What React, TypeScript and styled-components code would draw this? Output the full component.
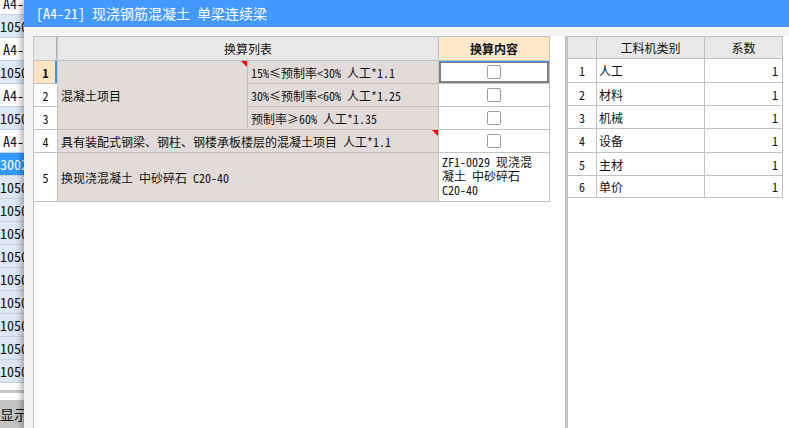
import React from "react";
import styled, { createGlobalStyle } from "styled-components";

const FONT = `"Noto Sans Mono CJK SC", "Noto Sans CJK SC", "DejaVu Sans", sans-serif`;

const Global = createGlobalStyle`
  html, body { margin: 0; padding: 0; background: #fff; }
  body { width: 789px; height: 428px; overflow: hidden; font-family: ${FONT}; color: #111; }
`;

const Page = styled.div`
  display: flex;
  width: 789px;
  height: 428px;
  overflow: hidden;
`;

/* ---------- background application (left, partly covered by the dialog) ---------- */
const BgPane = styled.div`
  width: 64px;
  flex: none;
  display: flex;
  flex-direction: column;
  overflow: hidden;
  background: #fff;
`;
const BgRows = styled.div`
  margin-top: -8px;
  display: flex;
  flex-direction: column;
`;
type Kind = "item" | "code" | "sel";
const BgRow = styled.div<{ $kind: Kind }>`
  height: 22px;
  border-bottom: 1px solid #c9d1dc;
  font-size: 14px;
  line-height: 22px;
  white-space: nowrap;
  padding-left: ${(p) => (p.$kind === "item" ? "3px" : "0")};
  background: ${(p) => (p.$kind === "item" ? "#ffffff" : p.$kind === "sel" ? "#3399ff" : "#dde7f5")};
  color: ${(p) => (p.$kind === "sel" ? "#fff" : "#111")};
`;
const BgFill = styled.div`
  flex: 1;
`;
const BgScroll = styled.div`
  height: 3px;
  background: #c6c6c6;
  margin-bottom: 7px;
`;
const BgButton = styled.div`
  height: 28px;
  background: #c4c4c4;
  font-size: 14px;
  line-height: 28px;
  white-space: nowrap;
`;

/* ---------- dialog ---------- */
const Dialog = styled.div`
  flex: 1;
  min-width: 0;
  margin-left: -40px;
  display: flex;
  flex-direction: column;
  position: relative;
  z-index: 1;
  box-shadow: -3px 0 6px rgba(0, 0, 0, 0.28);
`;
const TitleBar = styled.div`
  height: 27px;
  flex: none;
  background: #4399ff;
  color: #fff;
  font-size: 14px;
  line-height: 27px;
  padding-left: 12px;
  white-space: nowrap;
`;
const Body = styled.div`
  flex: 1;
  display: flex;
  background: #f4f4f4;
  padding: 9px 0 0 9px;
  min-height: 0;
`;
const Content = styled.div`
  flex: 1;
  display: flex;
  align-items: flex-start;
  background: #fff;
  border-left: 1px solid #c4c4c4;
`;

/* ---------- left grid ---------- */
const LINE = "#c2c2c2";
const LeftGrid = styled.div`
  display: grid;
  grid-template-columns: 23px 189px 190px 110px;
  grid-template-rows: 23px 22px 22px 22px 22px 48px;
  gap: 1px;
  background: ${LINE};
  border-top: 1px solid ${LINE};
  border-right: 1px solid ${LINE};
  border-bottom: 1px solid ${LINE};
  font-size: 12px;
`;

type Place = { $row: string; $col: string };

const HeadCell = styled.div<Place & { $accent?: boolean; $corner?: boolean }>`
  grid-row: ${(p) => p.$row};
  grid-column: ${(p) => p.$col};
  background: ${(p) => (p.$accent ? "#ffe7c8" : "#e8e8e8")};
  font-weight: ${(p) => (p.$accent ? 700 : 400)};
  display: flex;
  align-items: center;
  justify-content: center;
  box-shadow: ${(p) => (p.$corner ? "inset -1px 0 0 #b0b0b0" : "none")};
`;

const NumCell = styled.div<Place & { $active?: boolean }>`
  grid-row: ${(p) => p.$row};
  grid-column: ${(p) => p.$col};
  background: ${(p) => (p.$active ? "#ffe4c4" : "#fff")};
  font-weight: ${(p) => (p.$active ? 700 : 400)};
  box-shadow: ${(p) => (p.$active ? "inset -2px 0 0 #3c96f7" : "none")};
  display: flex;
  align-items: center;
  justify-content: center;
`;

const ItemCell = styled.div<Place & { $flag?: boolean }>`
  grid-row: ${(p) => p.$row};
  grid-column: ${(p) => p.$col};
  position: relative;
  background: #e1dcd9;
  display: flex;
  align-items: center;
  padding-left: 3px;
  white-space: nowrap;
  overflow: hidden;
  &::after {
    content: "";
    display: ${(p) => (p.$flag ? "block" : "none")};
    position: absolute;
    top: 0;
    right: 0;
    border-style: solid;
    border-width: 0 6px 6px 0;
    border-color: transparent #ff0000 transparent transparent;
  }
`;

const CheckCell = styled.div<Place & { $selected?: boolean }>`
  grid-row: ${(p) => p.$row};
  grid-column: ${(p) => p.$col};
  background: #fff;
  display: flex;
  align-items: center;
  justify-content: center;
  box-shadow: ${(p) => (p.$selected ? "inset 0 1px 0 #3c96f7, inset 0 0 0 2px #808080" : "none")};
`;

const Box = styled.span`
  width: 12px;
  height: 12px;
  border: 1px solid #9c9c9c;
  border-radius: 2px;
  background: #fff;
`;

const TextCell = styled.div<Place>`
  grid-row: ${(p) => p.$row};
  grid-column: ${(p) => p.$col};
  background: #fff;
  padding: 2px 2px 0 3px;
  line-height: 14px;
  white-space: pre-line;
`;

/* ---------- splitter + right grid ---------- */
const Gutter = styled.div`
  width: 15px;
  flex: none;
`;
const Splitter = styled.div`
  width: 3px;
  flex: none;
  align-self: stretch;
  background: #c4c4c4;
`;

const RightGrid = styled.div`
  display: grid;
  grid-template-columns: 28px 107px 77px;
  grid-template-rows: 21px 23px 22px 22px 23px 22px 21px;
  gap: 1px;
  background: ${LINE};
  border-top: 1px solid ${LINE};
  border-right: 1px solid ${LINE};
  border-bottom: 1px solid ${LINE};
  font-size: 12px;
`;
const RHead = styled.div`
  background: #e8e8e8;
  display: flex;
  align-items: center;
  justify-content: center;
`;
const RCell = styled.div<{ $align: "left" | "center" | "right" }>`
  background: #fff;
  display: flex;
  align-items: center;
  justify-content: ${(p) => (p.$align === "left" ? "flex-start" : p.$align === "right" ? "flex-end" : "center")};
  padding: ${(p) => (p.$align === "left" ? "0 0 0 2px" : p.$align === "right" ? "0 4px 0 0" : "0")};
`;

const bgRows: { t: string; k: Kind }[] = [
  { t: "A4-7", k: "item" },
  { t: "10503", k: "code" },
  { t: "A4-1", k: "item" },
  { t: "10503", k: "code" },
  { t: "A4-1", k: "item" },
  { t: "10503", k: "code" },
  { t: "A4-2", k: "item" },
  { t: "30020", k: "sel" },
  { t: "10503", k: "code" },
  { t: "10503", k: "code" },
  { t: "10505", k: "code" },
  { t: "10505", k: "code" },
  { t: "10505", k: "code" },
  { t: "10506", k: "code" },
  { t: "10507", k: "code" },
  { t: "10507", k: "code" },
  { t: "10507", k: "code" },
];

const factors = ["人工", "材料", "机械", "设备", "主材", "单价"];

export default function App() {
  return (
    <>
      <Global />
      <Page>
        <BgPane>
          <BgRows>
            {bgRows.map((r, i) => (
              <BgRow key={i} $kind={r.k}>
                {r.t}
              </BgRow>
            ))}
          </BgRows>
          <BgFill />
          <BgScroll />
          <BgButton>显示</BgButton>
        </BgPane>

        <Dialog>
          <TitleBar>[A4-21] 现浇钢筋混凝土 单梁连续梁</TitleBar>
          <Body>
            <Content>
              <LeftGrid>
                <HeadCell $row="1" $col="1" $corner />
                <HeadCell $row="1" $col="2 / 4">换算列表</HeadCell>
                <HeadCell $row="1" $col="4" $accent>
                  换算内容
                </HeadCell>

                <NumCell $row="2" $col="1" $active>1</NumCell>
                <NumCell $row="3" $col="1">2</NumCell>
                <NumCell $row="4" $col="1">3</NumCell>
                <NumCell $row="5" $col="1">4</NumCell>
                <NumCell $row="6" $col="1">5</NumCell>

                <ItemCell $row="2 / 5" $col="2" $flag>混凝土项目</ItemCell>
                <ItemCell $row="2" $col="3">15%≤预制率&lt;30% 人工*1.1</ItemCell>
                <ItemCell $row="3" $col="3">30%≤预制率&lt;60% 人工*1.25</ItemCell>
                <ItemCell $row="4" $col="3">预制率≥60% 人工*1.35</ItemCell>
                <ItemCell $row="5" $col="2 / 4" $flag>
                  具有装配式钢梁、钢柱、钢楼承板楼层的混凝土项目 人工*1.1
                </ItemCell>
                <ItemCell $row="6" $col="2 / 4">换现浇混凝土 中砂碎石 C20-40</ItemCell>

                <CheckCell $row="2" $col="4" $selected><Box /></CheckCell>
                <CheckCell $row="3" $col="4"><Box /></CheckCell>
                <CheckCell $row="4" $col="4"><Box /></CheckCell>
                <CheckCell $row="5" $col="4"><Box /></CheckCell>
                <TextCell $row="6" $col="4">{"ZF1-0029  现浇混\n凝土 中砂碎石\nC20-40"}</TextCell>
              </LeftGrid>

              <Gutter />
              <Splitter />

              <RightGrid>
                <RHead />
                <RHead>工料机类别</RHead>
                <RHead>系数</RHead>
                {factors.map((f, i) => (
                  <React.Fragment key={f}>
                    <RCell $align="center">{i + 1}</RCell>
                    <RCell $align="left">{f}</RCell>
                    <RCell $align="right">1</RCell>
                  </React.Fragment>
                ))}
              </RightGrid>
            </Content>
          </Body>
        </Dialog>
      </Page>
    </>
  );
}
